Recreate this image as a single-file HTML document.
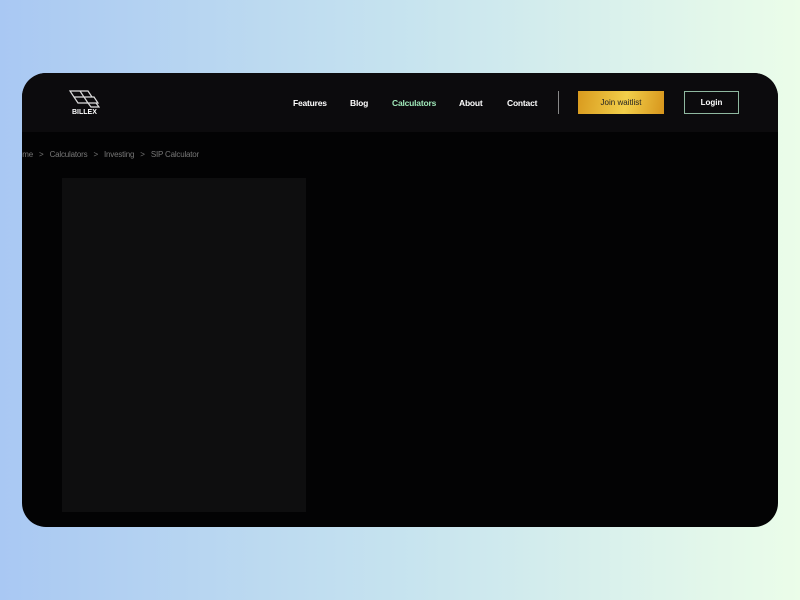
<!DOCTYPE html>
<html><head><style>
body{margin:0;width:800px;height:600px;overflow:hidden;background:linear-gradient(90deg,#a9c8f3 0%,#c6e3ef 50%,#ebfde9 100%);font-family:"Liberation Sans",sans-serif;}
.card{position:absolute;left:22px;top:73px;width:756px;height:454px;background:#030304;border-radius:24px;overflow:hidden;}
.nav{position:absolute;left:0;top:0;width:756px;height:59px;background:#0c0b0d;}
.nav a{position:absolute;top:25px;color:#fff;font-size:8.5px;font-weight:bold;letter-spacing:-0.2px;}
.bc{position:absolute;left:-4px;top:77px;color:#777;font-size:8px;white-space:pre;letter-spacing:-0.2px;}
.panel{position:absolute;left:40px;top:105px;width:244px;height:334px;background:#0e0e0f;}
.btn{position:absolute;top:18px;height:23px;font-size:8px;text-align:center;line-height:23px;}
</style></head><body>
<div class="card">
<div class="nav">
<svg style="position:absolute;left:46px;top:16px" width="32" height="20" viewBox="0 0 32 20" fill="none" stroke="#ddd" stroke-width="1.2"><path d="M2 2h10l4 6h-10zM12 2h8l4 6M6 8l4 6h10l-4-6M16 8h10l4 6h-10"/><path d="M20 14l3 4h8l-3-4"/></svg>
<div style="position:absolute;left:50px;top:36px;color:#fff;font-size:7px;font-weight:bold">BILLEX</div>
<a style="left:271px">Features</a><a style="left:328px">Blog</a><a style="left:370px;color:#9fe7b8">Calculators</a><a style="left:437px">About</a><a style="left:485px">Contact</a>
<div style="position:absolute;left:536px;top:18px;width:1px;height:23px;background:#888"></div>
<div class="btn" style="left:556px;width:86px;background:linear-gradient(100deg,#d99a1e,#f2cf4a 55%,#d7951c);color:#222">Join waitlist</div>
<div class="btn" style="left:662px;width:53px;height:21px;line-height:21px;border:1px solid #8fb8a0;color:#fff;font-weight:bold">Login</div>
</div>
<div class="bc">ome   &gt;   Calculators   &gt;   Investing   &gt;   SIP Calculator</div>
<div class="panel"></div>
</div>
</body></html>
